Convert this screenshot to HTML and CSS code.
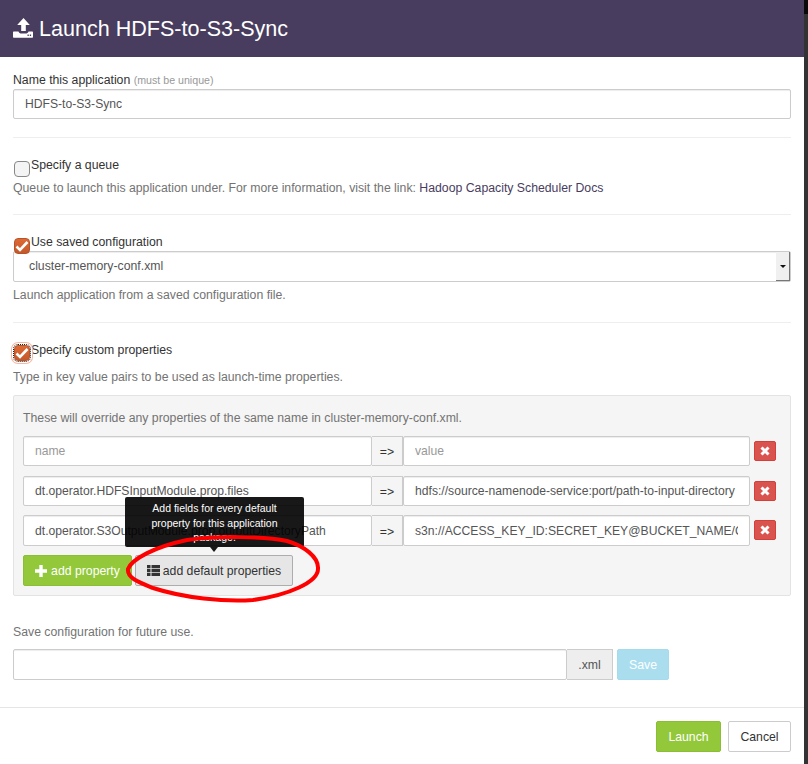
FILE: index.html
```html
<!DOCTYPE html>
<html lang="en">
<head>
<meta charset="utf-8">
<title>Launch HDFS-to-S3-Sync</title>
<link rel="stylesheet" href="styles.css">
</head>
<body>
<div class="modal">
  <header class="modal-header">
    <svg class="upload-icon" width="20" height="20" viewBox="0 0 20 20"><path fill="#fff" d="M10.500 0l6.300 7h-4v6h-4.600V7h-4z"/><path fill="#fff" fill-rule="evenodd" d="M0 14.500c0-.6.400-1 1-1h4.500c.5 1.500 1.500 2 3 2h4c1.500 0 2.500-.5 3-2H19c.6 0 1 .4 1 1V19c0 .4-.3.700-.7.700H.7C.3 19.700 0 19.400 0 19zM14.500 16.500v1.400h1.300v-1.400zm2.300 0v1.400h1.300v-1.400z"/></svg>
    <h1 class="modal-title">Launch HDFS-to-S3-Sync</h1>
  </header>
  <main class="modal-body">
    <section class="section section-name">
      <label class="label">Name this application <small class="hint">(must be unique)</small></label>
      <input class="control" type="text" value="HDFS-to-S3-Sync">
    </section>
    <section class="section section-queue">
      <div class="check-row"><span class="check"></span><span class="check-label">Specify a queue</span></div>
      <p class="help">Queue to launch this application under. For more information, visit the link: <a class="link">Hadoop Capacity Scheduler Docs</a></p>
    </section>
    <section class="section section-config">
      <div class="check-row"><span class="check checked"><svg width="14" height="12" viewBox="0 0 14 12"><path d="M1.500 6.500l3.500 3.500 7.500-8" fill="none" stroke="#fff" stroke-width="2.600"/></svg></span><span class="check-label">Use saved configuration</span></div>
      <div class="select"><span class="select-value">cluster-memory-conf.xml</span><span class="select-arrow"><i class="arrow"></i></span></div>
      <p class="help">Launch application from a saved configuration file.</p>
    </section>
    <section class="section section-custom">
      <div class="check-row"><span class="check checked focused"><svg width="14" height="12" viewBox="0 0 14 12"><path d="M1.500 6.500l3.500 3.500 7.500-8" fill="none" stroke="#fff" stroke-width="2.600"/></svg></span><span class="check-label">Specify custom properties</span></div>
      <p class="help custom-help">Type in key value pairs to be used as launch-time properties.</p>
      <div class="well">
        <p class="well-note">These will override any properties of the same name in cluster-memory-conf.xml.</p>
        <div class="prop-row">
          <input class="control" type="text" placeholder="name">
          <span class="addon addon-arrow">=&gt;</span>
          <input class="control" type="text" placeholder="value">
          <button class="btn-remove"><svg width="10" height="10" viewBox="0 0 10 10"><path d="M1.500 1.500l7 7m0-7l-7 7" stroke="#fff" stroke-width="3"/></svg></button>
        </div>
        <div class="prop-row prop-row-mid">
          <input class="control" type="text" value="dt.operator.HDFSInputModule.prop.files">
          <span class="addon addon-arrow">=&gt;</span>
          <input class="control" type="text" value="hdfs://source-namenode-service:port/path-to-input-directory">
          <button class="btn-remove"><svg width="10" height="10" viewBox="0 0 10 10"><path d="M1.500 1.500l7 7m0-7l-7 7" stroke="#fff" stroke-width="3"/></svg></button>
        </div>
        <div class="prop-row prop-row-last">
          <input class="control" type="text" value="dt.operator.S3OutputModule.prop.outputDirectoryPath">
          <span class="addon addon-arrow">=&gt;</span>
          <input class="control" type="text" value="s3n://ACCESS_KEY_ID:SECRET_KEY@BUCKET_NAME/OUTPUT">
          <button class="btn-remove"><svg width="10" height="10" viewBox="0 0 10 10"><path d="M1.500 1.500l7 7m0-7l-7 7" stroke="#fff" stroke-width="3"/></svg></button>
        </div>
        <div class="well-actions">
          <button class="btn btn-green btn-add"><svg width="12" height="12" viewBox="0 0 12 12"><path d="M6 0v12M0 6h12" stroke="#fff" stroke-width="3.400"/></svg>add property</button>
          <div class="default-wrap">
            <button class="btn btn-default-props"><svg width="13" height="11" viewBox="0 0 13 11"><path fill="#333" d="M0 0h3.500v3.200H0zM4.500 0H13v3.200H4.500zM0 3.900h3.500v3.200H0zM4.500 3.900H13v3.200H4.500zM0 7.800h3.500V11H0zM4.500 7.800H13V11H4.500z"/></svg>add default properties</button>
            <div class="tooltip">Add fields for every default property for this application package.<i class="tooltip-arrow"></i></div>
            <svg class="ring" width="200" height="70" viewBox="0 0 200 70"><path d="M4 34C8 24 30 12 63 5 90 1 140 1 163 6 180 11 195 22 194 34 194 47 165 60 129 65 100 67 60 63 29 53 14 47 3 43 4 34Z" fill="none" stroke="#f00" stroke-width="4"/></svg>
          </div>
        </div>
      </div>
    </section>
    <section class="section-save">
      <p class="help save-label">Save configuration for future use.</p>
      <div class="save-row">
        <input class="control" type="text">
        <span class="addon addon-xml">.xml</span>
        <button class="btn btn-save">Save</button>
      </div>
    </section>
  </main>
  <footer class="modal-footer">
    <button class="btn btn-green btn-launch">Launch</button>
    <button class="btn btn-cancel">Cancel</button>
  </footer>
</div>
</body>
</html>
```

FILE: styles.css
```css
* { box-sizing: border-box; }
html, body { margin: 0; height: 764px; overflow: hidden; }
body {
  background: linear-gradient(#0a0a0a 14px, #333 14px);
  font-family: "Liberation Sans", Arial, sans-serif;
  font-size: 12.270px;
  color: #333;
}
.modal { width: 804px; height: 764px; background: #fff; display: flex; flex-direction: column; }
.modal-header {
  height: 57px; background: #483d5e; display: flex; align-items: center; gap: 6px;
  padding: 0 13px; color: #fff; flex: none;
}
.upload-icon { flex: none; margin-top: -2px; }
.modal-title { margin: 0; font-size: 21.550px; font-weight: 400; line-height: 1; }
.modal-body { flex: 1; padding: 15px 13px 0; }
.section { border-bottom: 1px solid #eee; }
.section-name { height: 66px; }
.section-queue { height: 77px; padding-top: 20px; }
.section-config { height: 108px; padding-top: 19px; }
.section-custom { border-bottom: 0; padding-top: 19px; }
.label { display: block; line-height: 17px; height: 17px; }
.hint { font-size: 10.650px; color: #999; }
.control {
  display: block; width: 100%; height: 30px; padding: 0 11px; border: 1px solid #ccc; border-radius: 2px;
  font: 12.150px "Liberation Sans", Arial, sans-serif; color: #555; background: #fff;
  box-shadow: inset 0 1px 1px rgba(0,0,0,.075); outline: 0;
}
.control::placeholder { color: #999; opacity: 1; }
.check-row { display: flex; height: 16px; align-items: flex-start; gap: 1px; }
.check {
  width: 16px; height: 16px; border: 1px solid #888; border-radius: 4px; background: #f4f4f4; flex: none; margin: 3px 0 0 1px;
  display: flex; align-items: center; justify-content: center; position: relative;
}
.check.checked { background: linear-gradient(#de6a35, #c4582a); border-color: #b7532a; }
.check.focused { outline: 1px dotted #222; box-shadow: 0 0 0 2px #fff, 0 0 0 3px #f6b9a6; }
.check-label { line-height: 13px; margin-top: 1px; }
.section-config .check-label, .section-custom .check-label { margin-top: 2px; }
.help { margin: 8px 0 0; line-height: 17px; color: #737373; }
.section-queue .help { margin-top: 6px; }
.link { color: #483d5e; }
.section-config .check-row { margin-bottom: 1px; }
.section-config .check { margin-top: 4px; z-index: 1; }
.select {
  height: 31px; border: 1px solid #ccc; border-radius: 2px; display: flex; justify-content: space-between; align-items: stretch;
  color: #555; box-shadow: inset 0 1px 1px rgba(0,0,0,.075);
}
.select-value { padding: 0 15px; line-height: 28px; }
.select-arrow {
  width: 14px; background: #f0f0f0; display: flex; align-items: center; justify-content: center;
  border-right: 1px solid #777; border-bottom: 1px solid #777;
}
.arrow { width: 0; height: 0; border: 3px solid transparent; border-top: 3px solid #111; border-bottom: 0; }
.section-config .help { margin-top: 5px; }
.custom-help { margin-top: 11px; }
.well {
  margin-top: 9px; height: 201px; padding: 15px 9px 0; background: #f5f5f5; border: 1px solid #e3e3e3; border-radius: 2px;
}
.well-note { margin: 0 0 10px; line-height: 15px; color: #737373; }
.prop-row { display: flex; align-items: flex-start; height: 30px; margin-bottom: 10px; }
.prop-row-mid { margin-bottom: 9px; }
.prop-row-last { height: 31px; margin-bottom: 9px; }
.prop-row-last .control, .prop-row-last .addon-arrow { height: 31px; }
.prop-row .control:first-of-type { width: 349px; flex: none; }
.prop-row .control:nth-of-type(2) { width: 347px; flex: none; }
.addon {
  background: #eee; border: 1px solid #ccc; color: #333; display: flex; align-items: center; justify-content: center; flex: none;
}
.addon-arrow { width: 31px; height: 30px; padding-top: 2px; background: #f5f5f5; border-width: 1px 1px 1px 0; }
.btn-remove {
  width: 22px; height: 20px; margin: 5px 0 0 4px; padding: 0; border: 1px solid #d43f3a; border-radius: 2px; background: #d9534f; flex: none;
  display: flex; align-items: center; justify-content: center;
}
.well-actions { display: flex; gap: 3px; align-items: flex-start; }
.btn { font: 12.250px "Liberation Sans", Arial, sans-serif; border-radius: 2px; padding: 0; display: inline-flex; align-items: center; justify-content: center; }
.btn-green { background: #93c83b; border: 1px solid #8bbe35; color: #fff; }
.btn-add { width: 109px; height: 31px; gap: 4px; }
.default-wrap { position: relative; }
.btn-default-props { width: 158px; height: 31px; gap: 3px; background: #e6e6e6; border: 1px solid #adadad; color: #333; }
.tooltip {
  position: absolute; left: -10px; bottom: 39px; width: 179px; height: 50px; padding: 4px 14px;
  background: #000; color: #fff; font-size: 10.500px; line-height: 14.500px; text-align: center; border-radius: 2px; opacity: .9;
}
.tooltip-arrow { position: absolute; left: 85px; bottom: -5px; width: 0; height: 0; border: 4px solid transparent; border-top: 5px solid #000; border-bottom: 0; }
.ring { position: absolute; left: -11px; top: -20px; pointer-events: none; }
.section-save { margin-top: 28px; }
.save-label { margin: 0 0 8px; line-height: 17px; }
.save-row { display: flex; align-items: stretch; height: 31px; }
.save-row .control { width: 554px; height: 31px; flex: none; }
.addon-xml { width: 46px; border-width: 1px 1px 1px 0; color: #555; }
.btn-save { margin-left: 4px; width: 52px; background: #aadeef; border: 1px solid #a5dbed; color: #fff; }
.modal-footer { height: 57px; border-top: 1px solid #e5e5e5; display: flex; justify-content: flex-end; gap: 7px; padding: 13px 13px 0; flex: none; }
.btn-launch { width: 65px; height: 31px; }
.btn-cancel { width: 63px; height: 31px; background: #fff; border: 1px solid #ccc; color: #333; }
```
